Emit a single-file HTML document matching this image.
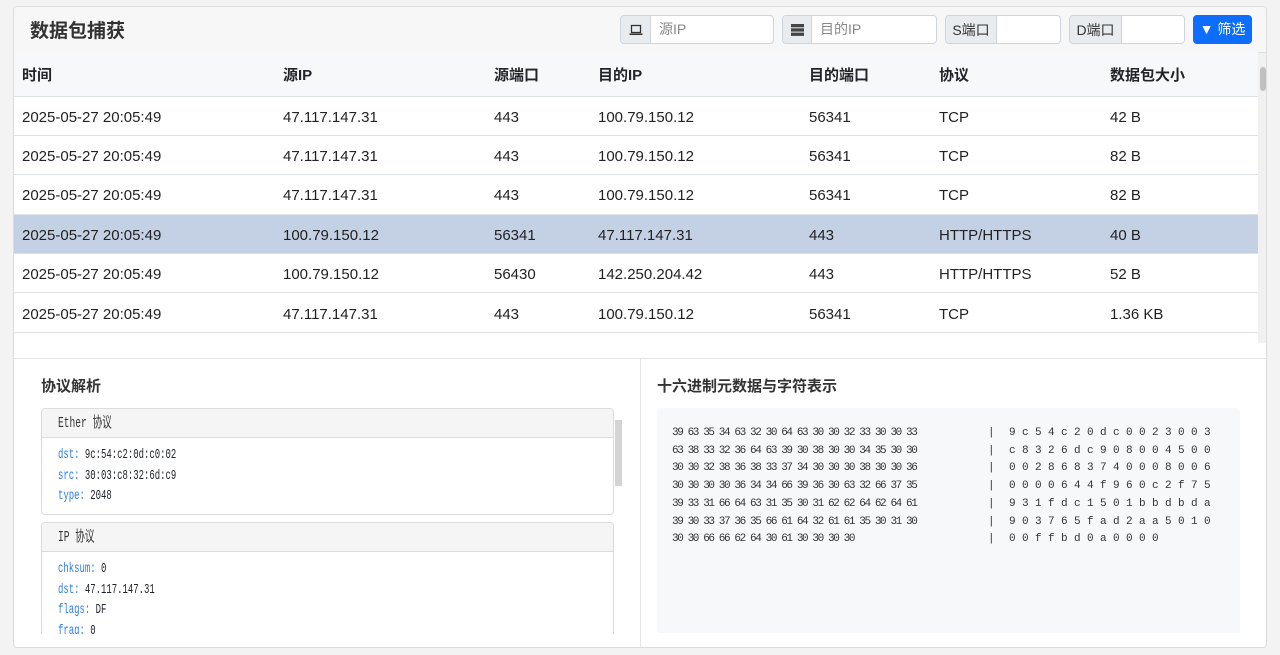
<!DOCTYPE html>
<html><head><meta charset="utf-8"><style>
*{box-sizing:border-box;margin:0;padding:0}
body{width:1280px;height:655px;background:#f3f3f3;font-family:"Liberation Sans","Noto Sans CJK SC",sans-serif;color:#212529;position:relative;overflow:hidden}
.card{position:absolute;left:13px;top:6px;width:1254px;height:642px;background:#fff;border:1px solid #dcdcdc;border-radius:4px;overflow:hidden}
.hdr{position:absolute;left:0;top:0;width:100%;height:46px;background:#f7f7f7;border-bottom:1px solid #dcdcdc}
.hdr h1{position:absolute;left:16px;top:9px;font-size:19px;font-weight:bold;color:#333}
.ig{position:absolute;top:8px;height:29px;border:1px solid #ced4da;border-radius:4px;background:#fff;display:flex;overflow:hidden}
.ig .ad{background:#e9ecef;border-right:1px solid #ced4da;display:flex;align-items:center;justify-content:center;font-size:14px;color:#333}
.ig .ph{padding-left:8px;font-size:14px;color:#888;line-height:27px}
.btn{position:absolute;left:1179px;top:8px;width:59px;height:29px;background:#0d6efd;border-radius:4px;color:#fff;font-size:14px;line-height:29px;text-align:center}
table{position:absolute;left:0;top:45px;border-collapse:collapse;width:1244px;font-size:15px}
th{height:44px;text-align:left;font-weight:bold;background:#f7f8f9;border-bottom:1px solid #dee2e6;padding-left:8px;padding-top:1px}
td{height:39.4px;border-bottom:1px solid #dee2e6;padding-left:8px;padding-top:3px;color:#222}
tr.sel td{background:#c4d0e3}
.sb{position:absolute;left:1244px;top:46px;width:10px;height:290px;background:#f1f1f1}
.sb div{position:absolute;left:2px;top:14px;width:6px;height:24px;background:#c1c1c1;border-radius:3px}
.bot{position:absolute;left:0;top:351px;width:100%;height:291px;border-top:1px solid #e5e5e5}
.vl{position:absolute;left:626px;top:351px;width:1px;height:291px;background:#e5e5e5}
h2{position:absolute;font-size:15px;font-weight:bold;color:#333}
.pc{position:absolute;left:27px;width:573px;border:1px solid #dcdcdc;border-radius:4px;background:#fff;overflow:hidden}
.pc .ph2{height:29px;background:#f5f5f5;border-bottom:1px solid #dcdcdc;padding-left:16px;line-height:29px}
.mono{font-family:"Liberation Mono","Noto Sans CJK SC",monospace;transform:scaleX(0.64);transform-origin:left;white-space:pre}
.pc .body{padding:7px 16px}
.pc .body div{font-size:14px;line-height:20.5px}
.k{color:#2b7de9}
.clip{position:absolute;left:0;top:401px;width:626px;height:226px;overflow:hidden}
.hex{position:absolute;left:643px;top:401px;width:583px;height:225px;background:#f7f8f9;border-radius:3px}
.hl{position:absolute;left:15px;font-family:"Liberation Mono",monospace;font-size:11px;color:#333;white-space:pre}
</style></head><body>
<div class="card">
<div class="hdr"><h1>数据包捕获</h1>
<div class="ig" style="left:606px;width:154px"><div class="ad" style="width:30px"><svg width="14" height="12" viewBox="0 0 14 12"><rect x="2.5" y="1.5" width="9" height="7" fill="none" stroke="#333" stroke-width="1.3"/><rect x="0.5" y="9.5" width="13" height="1.5" fill="#333"/></svg></div><div class="ph">源IP</div></div>
<div class="ig" style="left:768px;width:155px"><div class="ad" style="width:29px"><svg width="13" height="12" viewBox="0 0 13 12"><rect x="0" y="0" width="13" height="3.3" fill="#444"/><rect x="0" y="4.3" width="13" height="3.3" fill="#444"/><rect x="0" y="8.6" width="13" height="3.3" fill="#444"/></svg></div><div class="ph">目的IP</div></div>
<div class="ig" style="left:931px;width:116px"><div class="ad" style="width:51px">S端口</div></div>
<div class="ig" style="left:1055px;width:116px"><div class="ad" style="width:52px">D端口</div></div>
<div class="btn">▼ 筛选</div>
</div>
<table>
<colgroup><col style="width:261px"><col style="width:211px"><col style="width:104px"><col style="width:211px"><col style="width:130px"><col style="width:171px"><col></colgroup>
<tr><th>时间</th><th>源IP</th><th>源端口</th><th>目的IP</th><th>目的端口</th><th>协议</th><th>数据包大小</th></tr>
<tr><td>2025-05-27 20:05:49</td><td>47.117.147.31</td><td>443</td><td>100.79.150.12</td><td>56341</td><td>TCP</td><td>42 B</td></tr>
<tr><td>2025-05-27 20:05:49</td><td>47.117.147.31</td><td>443</td><td>100.79.150.12</td><td>56341</td><td>TCP</td><td>82 B</td></tr>
<tr><td>2025-05-27 20:05:49</td><td>47.117.147.31</td><td>443</td><td>100.79.150.12</td><td>56341</td><td>TCP</td><td>82 B</td></tr>
<tr class="sel"><td>2025-05-27 20:05:49</td><td>100.79.150.12</td><td>56341</td><td>47.117.147.31</td><td>443</td><td>HTTP/HTTPS</td><td>40 B</td></tr>
<tr><td>2025-05-27 20:05:49</td><td>100.79.150.12</td><td>56430</td><td>142.250.204.42</td><td>443</td><td>HTTP/HTTPS</td><td>52 B</td></tr>
<tr><td>2025-05-27 20:05:49</td><td>47.117.147.31</td><td>443</td><td>100.79.150.12</td><td>56341</td><td>TCP</td><td>1.36 KB</td></tr>
</table>
<div class="sb"><div></div></div>
<div class="bot"></div><div class="vl"></div>
<h2 style="left:27px;top:368px">协议解析</h2>
<h2 style="left:643px;top:368px">十六进制元数据与字符表示</h2>
<div class="clip">
<div class="pc" style="top:0;height:107px"><div class="ph2"><div class="mono" style="font-size:15px;color:#333">Ether 协议</div></div>
<div class="body"><div class="mono"><span class="k">dst:</span> 9c:54:c2:0d:c0:02</div><div class="mono"><span class="k">src:</span> 30:03:c8:32:6d:c9</div><div class="mono"><span class="k">type:</span> 2048</div></div></div>
<div class="pc" style="top:114px;height:140px"><div class="ph2"><div class="mono" style="font-size:15px;color:#333">IP 协议</div></div>
<div class="body"><div class="mono"><span class="k">chksum:</span> 0</div><div class="mono"><span class="k">dst:</span> 47.117.147.31</div><div class="mono"><span class="k">flags:</span> DF</div><div class="mono"><span class="k">frag:</span> 0</div></div></div>
<div style="position:absolute;left:601px;top:12px;width:7px;height:66px;background:#d4d4d4"></div>
</div>
<div class="hex">
<div class="hl" style="top:17px;line-height:17.7px;letter-spacing:-1.4px">39 63 35 34 63 32 30 64 63 30 30 32 33 30 30 33
63 38 33 32 36 64 63 39 30 38 30 30 34 35 30 30
30 30 32 38 36 38 33 37 34 30 30 30 38 30 30 36
30 30 30 30 36 34 34 66 39 36 30 63 32 66 37 35
39 33 31 66 64 63 31 35 30 31 62 62 64 62 64 61
39 30 33 37 36 35 66 61 64 32 61 61 35 30 31 30
30 30 66 66 62 64 30 61 30 30 30 30</div>
<div class="hl" style="left:331px;top:17px;line-height:17.7px">|
|
|
|
|
|
|</div>
<div class="hl" style="left:352px;top:17px;line-height:17.7px;letter-spacing:-0.1px">9 c 5 4 c 2 0 d c 0 0 2 3 0 0 3
c 8 3 2 6 d c 9 0 8 0 0 4 5 0 0
0 0 2 8 6 8 3 7 4 0 0 0 8 0 0 6
0 0 0 0 6 4 4 f 9 6 0 c 2 f 7 5
9 3 1 f d c 1 5 0 1 b b d b d a
9 0 3 7 6 5 f a d 2 a a 5 0 1 0
0 0 f f b d 0 a 0 0 0 0</div>
</div>
</div>
</body></html>
